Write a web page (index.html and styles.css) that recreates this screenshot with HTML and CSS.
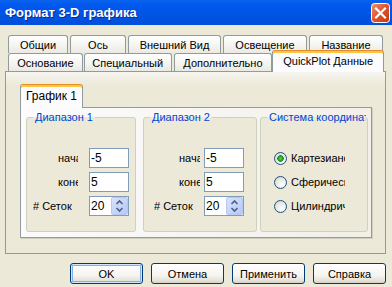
FILE: index.html
```html
<!DOCTYPE html>
<html lang="ru">
<head>
    <meta charset="UTF-8">
    <meta name="viewport" content="width=device-width, initial-scale=1.0">
    <title>Формат 3-D графика</title>
    <link rel="stylesheet" href="styles.css">
</head>
<body>
    <div id="wrap">
        <div class="titlebar">
            <span class="title">Формат 3-D графика</span>
            <span class="close">
                <svg width="19" height="20" viewBox="0 0 19 20">
                    <defs>
                        <linearGradient id="cg" x1="0" y1="0" x2="1" y2="1">
                            <stop offset="0" stop-color="#F0926F"/>
                            <stop offset="0.5" stop-color="#E0512A"/>
                            <stop offset="1" stop-color="#C23A12"/>
                        </linearGradient>
                    </defs>
                    <rect x="0.5" y="0.5" width="18" height="19" rx="3" fill="url(#cg)" stroke="#fff"/>
                    <path d="M5 5.5 L14 14.5 M14 5.5 L5 14.5" stroke="#fff" stroke-width="2.2" stroke-linecap="square"/>
                </svg>
            </span>
        </div>

        <div class="main">
            <div class="tabs">
                <div class="tab-row">
                    <div class="tab t-common">Общии</div>
                    <div class="tab t-axis">Ось</div>
                    <div class="tab t-look">Внешний Вид</div>
                    <div class="tab t-light">Освещение</div>
                    <div class="tab t-name">Название</div>
                </div>
                <div class="tab-row">
                    <div class="tab t-base">Основание</div>
                    <div class="tab t-special">Специальный</div>
                    <div class="tab t-extra">Дополнительно</div>
                    <div class="tab active t-qp">QuickPlot Данные</div>
                </div>
            </div>

            <div class="page">
                <div class="subtabs">
                    <div class="subtab">График 1</div>
                </div>
                <div class="subpage">
                    <!-- диапазон 1 -->
                    <fieldset class="group g1">
                        <legend>Диапазон 1</legend>
                        <div class="rows">
                            <div class="row">
                                <span class="lbl clip">начало</span>
                                <input class="field" type="text" value="-5">
                            </div>
                            <div class="row">
                                <span class="lbl clip">конец</span>
                                <input class="field" type="text" value="5">
                            </div>
                            <div class="row last">
                                <span class="lbl wide"># Сеток</span>
                                <div class="field spin">
                                    <input type="text" value="20">
                                    <span class="spin-btn">
                                        <svg width="15" height="16" viewBox="0 0 15 16">
                                            <path d="M4.5 6 L7.5 3 L10.5 6" fill="none" stroke="#4D6185" stroke-width="1.6"/>
                                            <path d="M4.5 10 L7.5 13 L10.5 10" fill="none" stroke="#4D6185" stroke-width="1.6"/>
                                        </svg>
                                    </span>
                                </div>
                            </div>
                        </div>
                    </fieldset>

                    <!-- диапазон 2 -->
                    <fieldset class="group g2">
                        <legend>Диапазон 2</legend>
                        <div class="rows">
                            <div class="row">
                                <span class="lbl clip">начало</span>
                                <input class="field" type="text" value="-5">
                            </div>
                            <div class="row">
                                <span class="lbl clip">конец</span>
                                <input class="field" type="text" value="5">
                            </div>
                            <div class="row last">
                                <span class="lbl wide"># Сеток</span>
                                <div class="field spin">
                                    <input type="text" value="20">
                                    <span class="spin-btn">
                                        <svg width="15" height="16" viewBox="0 0 15 16">
                                            <path d="M4.5 6 L7.5 3 L10.5 6" fill="none" stroke="#4D6185" stroke-width="1.6"/>
                                            <path d="M4.5 10 L7.5 13 L10.5 10" fill="none" stroke="#4D6185" stroke-width="1.6"/>
                                        </svg>
                                    </span>
                                </div>
                            </div>
                        </div>
                    </fieldset>

                    <!-- система координат -->
                    <fieldset class="group g3">
                        <legend>Система координат</legend>
                        <div class="rows">
                            <div class="row">
                                <span class="radio on"></span>
                                <span class="rlbl">Картезианская</span>
                            </div>
                            <div class="row">
                                <span class="radio"></span>
                                <span class="rlbl">Сферическая</span>
                            </div>
                            <div class="row last">
                                <span class="radio"></span>
                                <span class="rlbl">Цилиндрическая</span>
                            </div>
                        </div>
                    </fieldset>
                </div>
            </div>

            <div class="buttons">
                <button class="btn default">OK</button>
                <button class="btn">Отмена</button>
                <button class="btn">Применить</button>
                <button class="btn">Справка</button>
            </div>
        </div>
    </div>
</body>
</html>
```

FILE: styles.css
```css
* {
    margin: 0;
    padding: 0;
    box-sizing: border-box;
}
body {
    width: 392px;
    height: 287px;
    overflow: hidden;
    background: #ECE9D8;
    font: 11px "Liberation Sans", Arial, sans-serif;
    color: #000;
}

/* title */
.titlebar {
    height: 25px;
    display: flex;
    align-items: center;
    justify-content: space-between;
    padding: 0 2px 0 5px;
    background: linear-gradient(#0A63EC 0%, #0058EE 20%, #0054E3 60%, #004FD9 100%);
    color: #fff;
    font-weight: bold;
    font-size: 13px;
    text-shadow: 1px 1px 0 #0A2B8C;
}
.close {
    display: flex;
    width: 19px;
    height: 20px;
}

.main {
    padding: 10px 6px 0 5px;
}

/* tabs */
.tabs {
    padding-left: 3px;
}
.tab-row {
    display: flex;
    align-items: flex-end;
    height: 18px;
}
.tab {
    height: 18px;
    display: flex;
    align-items: center;
    justify-content: center;
    white-space: nowrap;
    border: 1px solid #919B9C;
    border-bottom: 0;
    border-radius: 3px 3px 0 0;
    background: linear-gradient(#FFFFFF, #F3F3EF 60%, #EAE9E2);
    margin-right: 2px;
}
.t-common { width: 60px; }
.t-axis { width: 56px; }
.t-look { width: 93px; }
.t-light { width: 84px; }
.t-name { width: 74px; }
.t-base { width: 75px; margin-right: 1px; }
.t-special { width: 88px; }
.t-extra { width: 99px; margin-right: 0; }
.tab.active {
    position: relative;
    z-index: 1;
    width: 112px;
    height: 22px;
    margin-bottom: -1px;
    padding-bottom: 2px;
    background: #FCFCFE;
    border-top-color: #E68B2C;
    box-shadow: inset 0 2px 0 #FFC73C;
}

/* outer page */
.page {
    height: 183px;
    border: 1px solid #919B9C;
    background: linear-gradient(#F6F5EF, #ECE9D8 14px);
    padding: 12px 0 0 14px;
}
.subtabs {
    display: flex;
    height: 23px;
    align-items: flex-end;
}
.subtab {
    position: relative;
    z-index: 1;
    width: 63px;
    height: 24px;
    margin-bottom: -1px;
    padding-bottom: 1px;
    display: flex;
    align-items: center;
    justify-content: center;
    border: 1px solid #919B9C;
    border-top-color: #E68B2C;
    border-bottom: 0;
    border-radius: 3px 3px 0 0;
    background: #FCFCFE;
    box-shadow: inset 0 2px 0 #FFC73C;
    font-size: 12px;
}
.subpage {
    width: 352px;
    height: 131px;
    display: flex;
    align-items: flex-start;
    padding: 3px 0 0 5px;
    border: 1px solid #919B9C;
    background: linear-gradient(100deg, #FCFCFE, #F1EFE6);
    box-shadow: 1px 1px 0 #D0CEBF;
}

/* group boxes */
.group {
    height: 121px;
    min-width: 0;
    border: 1px solid #D0D0BF;
    border-radius: 3px;
    background: #ECE9D8;
    flex: none;
}
.group legend {
    margin-left: 6px;
    padding: 0 2px;
    line-height: 13px;
    color: #0046D5;
    white-space: nowrap;
    overflow: hidden;
}
.g1 { width: 110px; margin-right: 7px; }
.g2 { width: 114px; margin-right: 3px; }
.g3 { width: 108px; }
.g3 legend { max-width: 99px; }

.rows {
    padding-top: 24px;
}
.row {
    display: flex;
    align-items: center;
    height: 20px;
    margin-bottom: 4px;
}
.row.last {
    margin-top: 1px;
}
.lbl {
    white-space: nowrap;
    overflow: hidden;
    flex: none;
}
.g1 .clip { margin-left: 31px; width: 20px; margin-right: 11px; }
.g1 .wide { margin-left: 6px; width: 56px; }
.g2 .clip { margin-left: 35px; width: 21px; margin-right: 4px; }
.g2 .wide { margin-left: 10px; width: 50px; }

.field {
    width: 40px;
    height: 20px;
    border: 1px solid #7F9DB9;
    background: #fff;
    font: 12px "Liberation Sans", Arial, sans-serif;
    padding: 0 1px;
    outline: none;
}
.spin {
    display: flex;
    align-items: center;
    padding: 0 0 0 1px;
}
.spin input {
    width: 20px;
    border: 0;
    outline: none;
    font: inherit;
    background: transparent;
}
.spin-btn {
    display: flex;
    margin-left: auto;
    width: 17px;
    height: 18px;
    border: 1px solid #B7C9F3;
    border-radius: 2px;
    background: linear-gradient(135deg, #D8E2FC, #B5C8F6);
    align-items: center;
    justify-content: center;
}

/* radios */
.g3 .row {
    padding-left: 13px;
}
.radio {
    width: 13px;
    height: 13px;
    flex: none;
    border: 1px solid #1C5180;
    border-radius: 50%;
    background: radial-gradient(circle at 65% 70%, #FFFFFF, #E2E1DA 70%, #D4D3CB);
}
.radio.on {
    background: radial-gradient(circle at 50% 50%, #5ED35E 0, #27A527 2px, #1E8F1E 3px, transparent 3.5px),
                radial-gradient(circle at 65% 70%, #FFFFFF, #E2E1DA 70%, #D4D3CB);
}
.rlbl {
    margin-left: 4px;
    width: 54px;
    white-space: nowrap;
    overflow: hidden;
}

/* buttons */
.buttons {
    display: flex;
    justify-content: flex-end;
    gap: 8px;
    margin-top: 9px;
    padding-right: 0;
}
.btn {
    width: 73px;
    height: 21px;
    border: 1px solid #003C74;
    border-radius: 3px;
    background: linear-gradient(#FFFFFF, #F5F4EF 60%, #E3E0D6 90%, #D6D0C5);
    font: 11px "Liberation Sans", Arial, sans-serif;
    color: #000;
}
.btn.default {
    box-shadow: inset 0 0 0 1px #CEE7FF, inset 0 0 0 2px #89ADE4;
}
```
